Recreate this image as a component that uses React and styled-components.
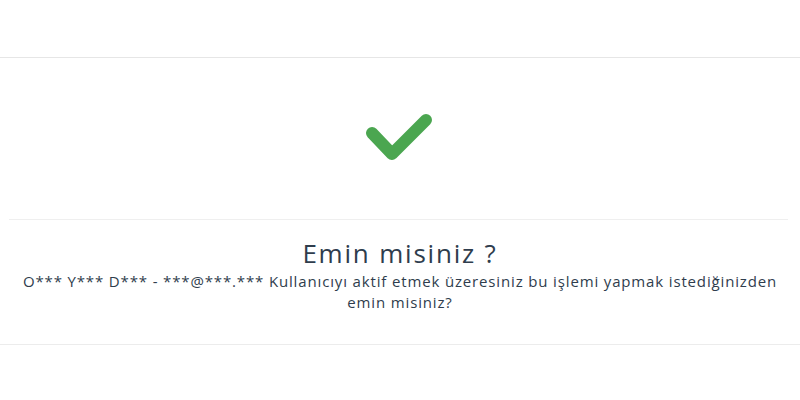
import React from "react";
import styled, { createGlobalStyle } from "styled-components";

const GlobalStyle = createGlobalStyle`
  body {
    margin: 0;
    background: #ffffff;
    font-family: "Open Sans", "Liberation Sans", sans-serif;
  }
`;

const App = () => {
  return (
    <>
      <GlobalStyle />
      <Modal>
        <Header />
        <Body>
          <IconWrap>
            <svg width="70" height="56" viewBox="0 0 70 56">
              <path
                d="M8 22 L28 43 L62 9"
                fill="none"
                stroke="#4ba650"
                strokeWidth="12"
                strokeLinecap="round"
                strokeLinejoin="round"
              />
            </svg>
          </IconWrap>
          <Divider />
          <Title>Emin misiniz ?</Title>
          <Message>
            O*** Y*** D*** - ***@***.*** Kullanıcıyı aktif etmek üzeresiniz bu
            işlemi yapmak istediğinizden emin misiniz?
          </Message>
        </Body>
        <Footer />
      </Modal>
    </>
  );
};

const Modal = styled.div`
  width: 800px;
  height: 400px;
  display: flex;
  flex-direction: column;
  background: #fff;
`;

const Header = styled.div`
  height: 57px;
  border-bottom: 1px solid #e6e6e6;
`;

const Body = styled.div`
  display: flex;
  flex-direction: column;
  align-items: center;
  height: 286px;
  border-bottom: 1px solid #ececec;
`;

const IconWrap = styled.div`
  margin-top: 53px;
  height: 56px;
  display: flex;
  justify-content: center;
  svg {
    margin-left: -3px;
  }
`;

const Divider = styled.div`
  align-self: stretch;
  margin: 52px 12px 0 9px;
  height: 1px;
  background: #efefef;
`;

const Title = styled.h2`
  margin: 17px 0 0;
  font-size: 26px;
  font-weight: 400;
  line-height: 32px;
  letter-spacing: 1.8px;
  color: #2f3d4d;
`;

const Message = styled.p`
  margin: 2px 0 0;
  max-width: 770px;
  text-align: center;
  font-size: 15px;
  line-height: 21px;
  letter-spacing: 0.85px;
  color: #2f3d4d;
`;

const Footer = styled.div`
  flex: 1;
`;

export default App;
